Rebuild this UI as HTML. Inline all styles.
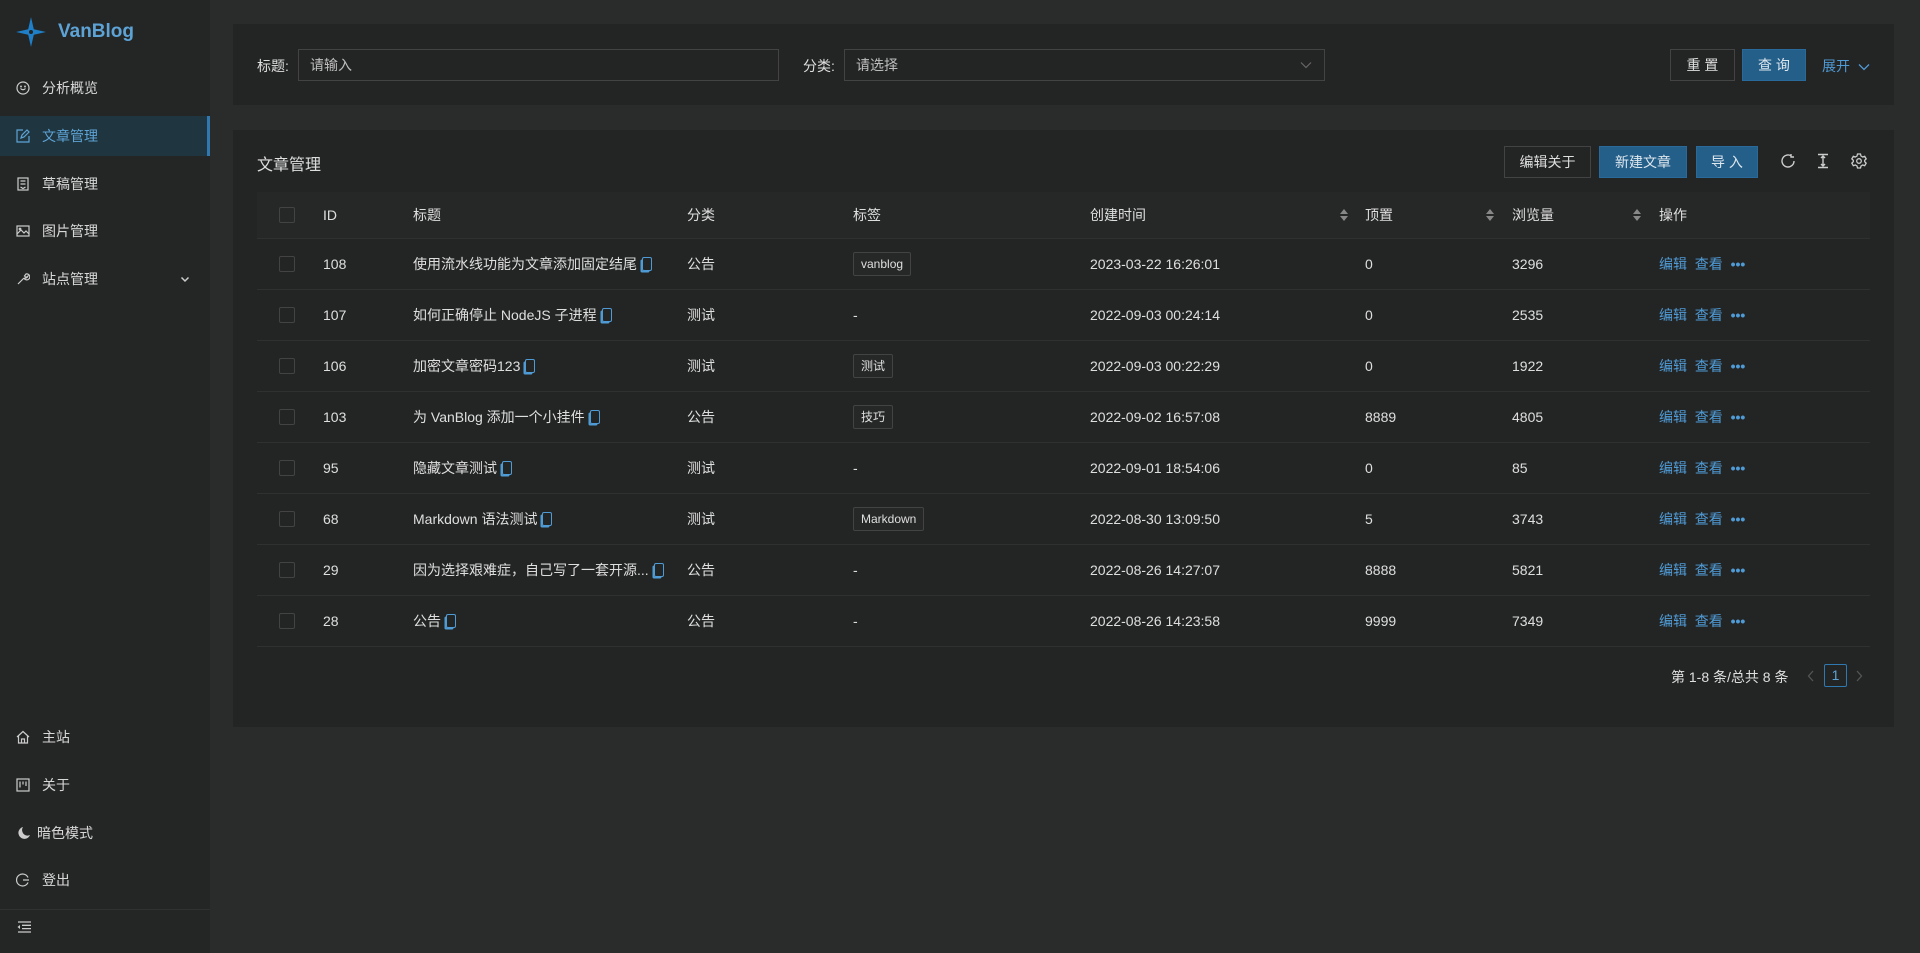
<!DOCTYPE html>
<html><head><meta charset="utf-8"><style>
*{box-sizing:border-box;margin:0;padding:0}
body{width:1920px;height:953px;background:#2a2b2b;font-family:"Liberation Sans","Noto Sans CJK SC",sans-serif;font-size:14px;color:rgba(255,255,255,.85);position:relative;overflow:hidden}
.sb{position:absolute;left:0;top:0;width:210px;height:953px;background:#242525}
.logo{position:absolute;left:16px;top:17px;display:flex;align-items:center}
.logo span{color:#5da3d6;font-size:19px;font-weight:bold;margin-left:12px}
.mi{position:absolute;left:0;width:210px;height:40px;display:flex;align-items:center;padding-left:16px;font-size:14px;color:rgba(255,255,255,.82)}
.mi svg{width:14px;height:14px;margin-right:12px}
.mi.act{background:#1f353f;color:#5da3d6;border-right:3px solid #2f78b0;height:40px}
.card{position:absolute;background:#232424}
.lbl{position:absolute}
.inp{position:absolute;height:32px;border:1px solid #434343;background:#232424;color:rgba(255,255,255,.7);padding:0 11px;line-height:30px}
.btn{position:absolute;height:32px;border:1px solid #434343;line-height:30px;text-align:center;font-size:14px}
.pri{background:#245f8a;border-color:#2a6a9a}
.th,.tr{position:absolute;left:257px;width:1613px;display:flex;align-items:center}
.th{top:192px;height:47px;background:#262727;border-bottom:1px solid #2f3030}
.tr{height:51px;border-bottom:1px solid #2f3030}
.c{position:absolute;white-space:nowrap}
.cb{width:16px;height:16px;border:1px solid #434343;border-radius:2px;position:absolute;left:22px}
.tag{display:inline-block;border:1px solid #434343;background:#262727;padding:0 7px;font-size:12px;line-height:22px;border-radius:2px}
.a{color:#4f9bd6}
.sort{position:absolute;width:8px;height:12px}
.cp{display:inline-block;width:10px;height:14px;border:1.5px solid #4f9bd6;border-radius:2px;margin-left:5px;vertical-align:-2px;box-shadow:-2px 2px 0 -0.5px #4f9bd6}
</style></head><body>
<div class="sb">
 <div class="logo"><svg width="30" height="30" viewBox="0 0 30 30"><path d="M15 0 L17.8 12.2 L30 15 L17.8 17.8 L15 30 L12.2 17.8 L0 15 L12.2 12.2Z" fill="#1f7fc8"/><circle cx="15" cy="15" r="2" fill="#242525"/></svg><span>VanBlog</span></div>
 <div class="mi" style="top:68px"><svg viewBox="0 0 14 14" fill="none" stroke="#ccc" stroke-width="1.2"><circle cx="7" cy="7" r="6"/><path d="M4.5 7.5q2.5 2.5 5 0"/><circle cx="5" cy="5.5" r=".4"/><circle cx="9" cy="5.5" r=".4"/></svg>分析概览</div>
 <div class="mi act" style="top:116px"><svg viewBox="0 0 14 14" fill="none" stroke="#5da3d6" stroke-width="1.2"><path d="M7 1H1v12h12V7"/><path d="M5 9l1-3 5-5 2 2-5 5z"/></svg>文章管理</div>
 <div class="mi" style="top:164px"><svg viewBox="0 0 14 14" fill="none" stroke="#ccc" stroke-width="1.2"><rect x="2" y="1" width="10" height="12"/><path d="M4.5 4h5M4.5 7h5M4.5 10l2.5 1.5 2.5-1.5"/></svg>草稿管理</div>
 <div class="mi" style="top:211px"><svg viewBox="0 0 14 14" fill="none" stroke="#ccc" stroke-width="1.2"><rect x="1" y="2" width="12" height="10"/><path d="M1 10l4-4 3 3 2-2 3 3"/><circle cx="4" cy="5" r=".8"/></svg>图片管理</div>
 <div class="mi" style="top:259px"><svg viewBox="0 0 14 14" fill="none" stroke="#ccc" stroke-width="1.2"><path d="M2 12l6-6M8 6a3 3 0 1 0 2-4l-1.5 2 1.5 1.5 2-1.5a3 3 0 0 1-4 2"/></svg>站点管理<svg style="position:absolute;left:180px;width:10px;height:10px" viewBox="0 0 10 10" fill="none" stroke="#ccc" stroke-width="1.5"><path d="M1.5 3.5l3.5 3.5 3.5-3.5"/></svg></div>
 <div class="mi" style="top:717px"><svg viewBox="0 0 14 14" fill="none" stroke="#ccc" stroke-width="1.2"><path d="M1 7l6-5.5L13 7M2.5 5.8V13h9V5.8M5.5 13V9h3v4"/></svg>主站</div>
 <div class="mi" style="top:765px"><svg viewBox="0 0 14 14" fill="none" stroke="#ccc" stroke-width="1.2"><rect x="1" y="1" width="12" height="12"/><path d="M4 3.5v6M7 3.5v3M10 3.5v4.5"/></svg>关于</div>
 <div class="mi" style="top:813px;padding-left:17px"><svg viewBox="0 0 14 14" style="margin-right:6px"><path d="M6 1a6 6 0 1 0 7 8A5.5 5.5 0 0 1 6 1z" fill="#ccc"/></svg>暗色模式</div>
 <div class="mi" style="top:860px"><svg viewBox="0 0 14 14" fill="none" stroke="#ccc" stroke-width="1.2"><path d="M12 4.5A6 6 0 1 0 12 9.5M7 7h6"/></svg>登出</div>
 <div style="position:absolute;left:0;top:909px;width:210px;border-top:1px solid #303131"></div>
 <svg style="position:absolute;left:17px;top:921px" width="14" height="12" viewBox="0 0 14 12" fill="none" stroke="#ccc" stroke-width="1.3"><path d="M1 1h13M5 4.3h9M5 7.6h9M1 11h13"/><path d="M3 4v4L0.5 6z" fill="#ccc" stroke="none"/></svg>
</div>

<div class="card" style="left:233px;top:24px;width:1661px;height:81px"></div>
<div class="lbl" style="left:257px;top:56px">标题:</div>
<div class="inp" style="left:298px;top:49px;width:481px">请输入</div>
<div class="lbl" style="left:803px;top:56px">分类:</div>
<div class="inp" style="left:844px;top:49px;width:481px">请选择<svg style="position:absolute;right:12px;top:11px" width="12" height="8" viewBox="0 0 12 8" fill="none" stroke="#666" stroke-width="1.2"><path d="M1 1.5l5 5 5-5"/></svg></div>
<div class="btn" style="left:1670px;top:49px;width:65px">重 置</div>
<div class="btn pri" style="left:1742px;top:49px;width:64px">查 询</div>
<div class="a" style="position:absolute;left:1822px;top:56px">展开 <svg width="12" height="8" viewBox="0 0 12 8" fill="none" stroke="#4f9bd6" stroke-width="1.3" style="margin-left:4px"><path d="M1 1.5l5 5 5-5"/></svg></div>

<div class="card" style="left:233px;top:130px;width:1661px;height:597px"></div>
<div style="position:absolute;left:257px;top:151px;font-size:16px">文章管理</div>
<div class="btn" style="left:1504px;top:146px;width:87px">编辑关于</div>
<div class="btn pri" style="left:1599px;top:146px;width:88px">新建文章</div>
<div class="btn pri" style="left:1696px;top:146px;width:62px">导 入</div>
<svg style="position:absolute;left:1780px;top:153px" width="16" height="16" viewBox="0 0 16 16" fill="none" stroke="#ccc" stroke-width="1.4"><path d="M14 8A6 6 0 1 1 11 2.8"/><path d="M11 1v3h3" /></svg>
<svg style="position:absolute;left:1815px;top:153px" width="16" height="16" viewBox="0 0 16 16" fill="none" stroke="#ccc" stroke-width="1.4"><path d="M3 1.5h10M3 14.5h10M8 3v10M6 5l2-2 2 2M6 11l2 2 2-2"/></svg>
<svg style="position:absolute;left:1851px;top:153px" width="16" height="16" viewBox="0 0 16 16" fill="none" stroke="#ccc" stroke-width="1.3"><path d="M6.5 1h3l.5 2 1.7 1 2-.7 1.5 2.6-1.5 1.4v1.4l1.5 1.4-1.5 2.6-2-.7-1.7 1-.5 2h-3l-.5-2-1.7-1-2 .7L.8 10.1l1.5-1.4V7.3L.8 5.9l1.5-2.6 2 .7 1.7-1z"/><circle cx="8" cy="8" r="2.3"/></svg>

<div class="th">
 <div class="cb"></div>
 <div class="c" style="left:66px">ID</div>
 <div class="c" style="left:156px">标题</div>
 <div class="c" style="left:430px">分类</div>
 <div class="c" style="left:596px">标签</div>
 <div class="c" style="left:833px">创建时间</div>
 <svg class="sort" style="left:1083px" viewBox="0 0 8 12" fill="#888"><path d="M4 0l4 5H0zM4 12l4-5H0z"/></svg>
 <div class="c" style="left:1108px">顶置</div>
 <svg class="sort" style="left:1229px" viewBox="0 0 8 12" fill="#888"><path d="M4 0l4 5H0zM4 12l4-5H0z"/></svg>
 <div class="c" style="left:1255px">浏览量</div>
 <svg class="sort" style="left:1376px" viewBox="0 0 8 12" fill="#888"><path d="M4 0l4 5H0zM4 12l4-5H0z"/></svg>
 <div class="c" style="left:1402px">操作</div>
</div>

<div class="tr" style="top:239px"><div class="cb"></div><div class="c" style="left:66px">108</div><div class="c" style="left:156px">使用流水线功能为文章添加固定结尾<span class="cp"></span></div><div class="c" style="left:430px">公告</div><div class="c" style="left:596px"><span class="tag">vanblog</span></div><div class="c" style="left:833px">2023-03-22 16:26:01</div><div class="c" style="left:1108px">0</div><div class="c" style="left:1255px">3296</div><div class="c a" style="left:1402px">编辑&nbsp; 查看&nbsp; <b>•••</b></div></div>
<div class="tr" style="top:290px"><div class="cb"></div><div class="c" style="left:66px">107</div><div class="c" style="left:156px">如何正确停止 NodeJS 子进程<span class="cp"></span></div><div class="c" style="left:430px">测试</div><div class="c" style="left:596px">-</div><div class="c" style="left:833px">2022-09-03 00:24:14</div><div class="c" style="left:1108px">0</div><div class="c" style="left:1255px">2535</div><div class="c a" style="left:1402px">编辑&nbsp; 查看&nbsp; <b>•••</b></div></div>
<div class="tr" style="top:341px"><div class="cb"></div><div class="c" style="left:66px">106</div><div class="c" style="left:156px">加密文章密码123<span class="cp"></span></div><div class="c" style="left:430px">测试</div><div class="c" style="left:596px"><span class="tag">测试</span></div><div class="c" style="left:833px">2022-09-03 00:22:29</div><div class="c" style="left:1108px">0</div><div class="c" style="left:1255px">1922</div><div class="c a" style="left:1402px">编辑&nbsp; 查看&nbsp; <b>•••</b></div></div>
<div class="tr" style="top:392px"><div class="cb"></div><div class="c" style="left:66px">103</div><div class="c" style="left:156px">为 VanBlog 添加一个小挂件<span class="cp"></span></div><div class="c" style="left:430px">公告</div><div class="c" style="left:596px"><span class="tag">技巧</span></div><div class="c" style="left:833px">2022-09-02 16:57:08</div><div class="c" style="left:1108px">8889</div><div class="c" style="left:1255px">4805</div><div class="c a" style="left:1402px">编辑&nbsp; 查看&nbsp; <b>•••</b></div></div>
<div class="tr" style="top:443px"><div class="cb"></div><div class="c" style="left:66px">95</div><div class="c" style="left:156px">隐藏文章测试<span class="cp"></span></div><div class="c" style="left:430px">测试</div><div class="c" style="left:596px">-</div><div class="c" style="left:833px">2022-09-01 18:54:06</div><div class="c" style="left:1108px">0</div><div class="c" style="left:1255px">85</div><div class="c a" style="left:1402px">编辑&nbsp; 查看&nbsp; <b>•••</b></div></div>
<div class="tr" style="top:494px"><div class="cb"></div><div class="c" style="left:66px">68</div><div class="c" style="left:156px">Markdown 语法测试<span class="cp"></span></div><div class="c" style="left:430px">测试</div><div class="c" style="left:596px"><span class="tag">Markdown</span></div><div class="c" style="left:833px">2022-08-30 13:09:50</div><div class="c" style="left:1108px">5</div><div class="c" style="left:1255px">3743</div><div class="c a" style="left:1402px">编辑&nbsp; 查看&nbsp; <b>•••</b></div></div>
<div class="tr" style="top:545px"><div class="cb"></div><div class="c" style="left:66px">29</div><div class="c" style="left:156px">因为选择艰难症，自己写了一套开源...<span class="cp"></span></div><div class="c" style="left:430px">公告</div><div class="c" style="left:596px">-</div><div class="c" style="left:833px">2022-08-26 14:27:07</div><div class="c" style="left:1108px">8888</div><div class="c" style="left:1255px">5821</div><div class="c a" style="left:1402px">编辑&nbsp; 查看&nbsp; <b>•••</b></div></div>
<div class="tr" style="top:596px"><div class="cb"></div><div class="c" style="left:66px">28</div><div class="c" style="left:156px">公告<span class="cp"></span></div><div class="c" style="left:430px">公告</div><div class="c" style="left:596px">-</div><div class="c" style="left:833px">2022-08-26 14:23:58</div><div class="c" style="left:1108px">9999</div><div class="c" style="left:1255px">7349</div><div class="c a" style="left:1402px">编辑&nbsp; 查看&nbsp; <b>•••</b></div></div>

<div style="position:absolute;left:1671px;top:667px">第 1-8 条/总共 8 条</div>
<svg style="position:absolute;left:1807px;top:670px" width="8" height="12" viewBox="0 0 8 12" fill="none" stroke="#555" stroke-width="1.3"><path d="M6 1L1.5 6 6 11"/></svg>
<div style="position:absolute;left:1824px;top:664px;width:23px;height:23px;border:1px solid #2f78b0;border-radius:2px;text-align:center;line-height:21px;color:#5da3d6">1</div>
<svg style="position:absolute;left:1855px;top:670px" width="8" height="12" viewBox="0 0 8 12" fill="none" stroke="#555" stroke-width="1.3"><path d="M2 1l4.5 5L2 11"/></svg>
</body></html>
